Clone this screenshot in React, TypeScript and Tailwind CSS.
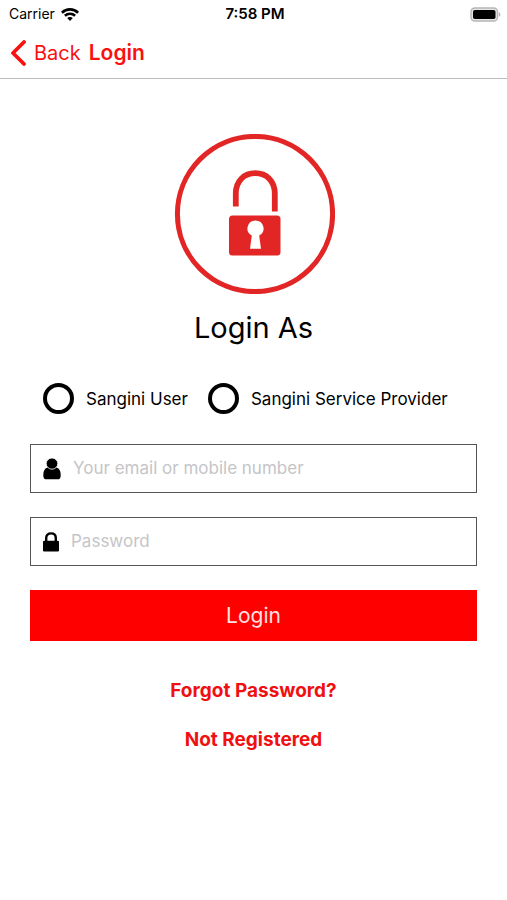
import React, { useState } from 'react'

type Role = 'user' | 'provider'

const ROLES: { value: Role; label: string }[] = [
  { value: 'user', label: 'Sangini User' },
  { value: 'provider', label: 'Sangini Service Provider' },
]

function WifiIcon() {
  return (
    <svg className="w-[18px] h-[13px]" viewBox="0 0 18 13" fill="none" stroke="#000" strokeWidth="2.6" aria-hidden="true">
      <path d="M0.9 4.7C5.4 0.3 12.6 0.3 17.1 4.7" />
      <path d="M3.9 7.8C6.8 5 11.2 5 14.1 7.8" />
      <path d="M9 12.9L6.2 10.1C7.8 8.6 10.2 8.6 11.8 10.1Z" fill="#000" stroke="none" />
    </svg>
  )
}

function BatteryIcon() {
  return (
    <svg className="w-[31px] h-[15px]" viewBox="0 0 31 15" aria-hidden="true">
      <rect x="1" y="1" width="26.5" height="13" rx="3.8" fill="#e6e6e6" stroke="#b5b5b5" strokeWidth="1.4" />
      <rect x="3" y="3" width="22.5" height="9" rx="1.8" fill="#000" />
      <path d="M28.8 5.2C30.8 5.9 30.8 9.1 28.8 9.8Z" fill="#b0b0b0" />
    </svg>
  )
}

function PadlockBadge() {
  return (
    <svg className="w-[162px] h-40" viewBox="-2 0 162 160" aria-hidden="true">
      <circle cx="80" cy="80" r="77.6" fill="none" stroke="#e22626" strokeWidth="5" />
      <path d="M60.8 72.5V59.5C60.8 47 69 39.2 80.3 39.2S99.8 47 99.8 59.5V77.5" fill="none" stroke="#e22626" strokeWidth="5.8" />
      <rect x="54" y="81.5" width="51.5" height="40" rx="3.5" fill="#e22626" />
      <path d="M80.5 86.5A8 8 0 0 1 84.2 101.6L86 114.8H75L76.8 101.6A8 8 0 0 1 80.5 86.5Z" fill="#fff" />
    </svg>
  )
}

function UserIcon() {
  return (
    <svg className="w-[18px] h-[22px] shrink-0" viewBox="0 0 18 22" aria-hidden="true">
      <path d="M4.5 9.6H13.5C16.6 10.6 17.7 13.6 17.7 17.4C17.7 20 16.6 21.3 14.6 21.3H3.4C1.4 21.3 0.3 20 0.3 17.4C0.3 13.6 1.4 10.6 4.5 9.6Z" />
      <ellipse cx="9" cy="5.6" rx="5.8" ry="5.6" stroke="#fff" strokeWidth="0.8" />
    </svg>
  )
}

function LockIcon() {
  return (
    <svg className="w-4 h-5 shrink-0" viewBox="0 0 16 20" aria-hidden="true">
      <path d="M3.2 10V6C3.2 3 5.2 1.4 8 1.4S12.8 3 12.8 6V10" fill="none" stroke="#000" strokeWidth="2.4" />
      <rect x="0" y="8.8" width="16" height="10.8" rx="1.3" />
    </svg>
  )
}

function StatusBar() {
  return (
    <div className="grid grid-cols-[1fr_auto_1fr] items-center h-7 pl-[9px] pr-1.5 text-sm">
      <div className="flex items-center gap-1.5">
        <span>Carrier</span>
        <WifiIcon />
      </div>
      <span className="text-[15px] font-semibold">7:58 PM</span>
      <div className="flex justify-end">
        <BatteryIcon />
      </div>
    </div>
  )
}

export default function App() {
  const [role, setRole] = useState<Role | null>(null)

  const handleSubmit = (e: React.FormEvent) => {
    e.preventDefault()
  }

  return (
    <div className="min-h-screen bg-white text-black font-['Inter',sans-serif]">
      <header className="border-b border-[#bcbcbc]">
        <StatusBar />
        <nav className="flex items-center gap-2 h-[50px] px-2.5 text-[21px] text-[#f91111]">
          <button type="button" className="flex items-center gap-2 text-xl">
            <svg className="w-4 h-[26px]" viewBox="0 0 16 26" fill="none" stroke="currentColor" strokeWidth="3.8" strokeLinecap="round" strokeLinejoin="round" aria-hidden="true">
              <path d="M14 2L3 13L14 24" />
            </svg>
            Back
          </button>
          <h1 className="font-semibold">Login</h1>
        </nav>
      </header>

      <main className="flex flex-col px-[30px] pt-[55px]">
        <div className="flex flex-col items-center gap-3.5">
          <PadlockBadge />
          <h2 className="text-[29px] leading-10">Login As</h2>
        </div>

        <form onSubmit={handleSubmit} className="flex flex-col gap-6 pt-[35px]">
          <fieldset className="flex flex-wrap gap-x-5 gap-y-3 px-[13px] pb-1.5">
            {ROLES.map(({ value, label }) => (
              <label key={value} className="flex items-center gap-3 text-[17px] leading-6">
                <input
                  type="radio"
                  name="role"
                  value={value}
                  checked={role === value}
                  onChange={() => setRole(value)}
                  className="appearance-none size-[31px] rounded-full border-4 border-black bg-white checked:bg-black checked:bg-clip-content checked:p-1"
                />
                {label}
              </label>
            ))}
          </fieldset>

          <div className="flex items-center gap-3 h-[49px] px-3 border border-[#555]">
            <UserIcon />
            <input
              type="text"
              aria-label="Your email or mobile number"
              placeholder="Your email or mobile number"
              className="flex-1 min-w-0 text-[17px] outline-none placeholder:text-[#c5c5c7]"
            />
          </div>

          <div className="flex items-center gap-3 h-[49px] px-3 border border-[#555]">
            <LockIcon />
            <input
              type="password"
              aria-label="Password"
              placeholder="Password"
              className="flex-1 min-w-0 text-[17px] outline-none placeholder:text-[#c5c5c7]"
            />
          </div>

          <button type="submit" className="h-[51px] bg-[#ff0000] text-[21px] text-[#ffe0e0]">
            Login
          </button>
        </form>

        <div className="flex flex-col items-center gap-[21px] pt-9 text-[19px] leading-7 font-bold text-[#f01010]">
          <a href="#forgot-password">Forgot Password?</a>
          <a href="#register">Not Registered</a>
        </div>
      </main>
    </div>
  )
}
